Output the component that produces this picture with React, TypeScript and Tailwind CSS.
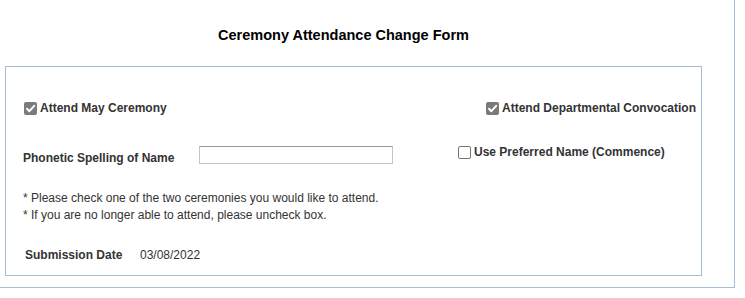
import React from "react";

function Box({ checked }: { checked: boolean }) {
  if (checked) {
    return (
      <span className="inline-flex h-[13px] w-[13px] shrink-0 items-center justify-center rounded-[2px] bg-[#7a7a7a]">
        <svg viewBox="0 0 13 13" className="h-[13px] w-[13px]">
          <path d="M3 6.8 L5.4 9.2 L10.2 3.8" fill="none" stroke="#fff" strokeWidth="2" strokeLinecap="round" strokeLinejoin="round" />
        </svg>
      </span>
    );
  }
  return <span className="inline-block h-[13px] w-[13px] shrink-0 rounded-[2px] border border-[#767676] bg-white" />;
}

function Check({ label, checked }: { label: string; checked: boolean }) {
  return (
    <label className="flex items-center gap-[3px] font-bold text-[#333]">
      <Box checked={checked} />
      <span>{label}</span>
    </label>
  );
}

export default function App() {
  return (
    <div className="h-[298px] w-[745px] bg-white text-[12px] leading-[16px] text-[#333] [font-family:'Liberation_Sans',Arial,sans-serif]">
      <div className="h-[288px] w-[735px] border-b border-r border-[#a7bccf]">
        <h1 className="w-[687px] pt-[27px] pb-[22px] text-center text-[14.5px] leading-[17px] font-bold text-black">
          Ceremony Attendance Change Form
        </h1>
        <div className="ml-[5px] h-[210px] w-[697px] border border-[#a7bccf]">
          <div className="mt-[33px] flex h-[16px] items-center justify-between pl-[18px] pr-[5px]">
            <Check label="Attend May Ceremony" checked />
            <Check label="Attend Departmental Convocation" checked />
          </div>
          <div className="mt-[28px] flex items-start pl-[17px]">
            <span className="mt-[6px] w-[176px] font-bold">Phonetic Spelling of Name</span>
            <input
              type="text"
              className="mt-[2px] h-[18px] w-[194px] border border-[#c4c4c4] border-t-[#999] bg-white px-1 outline-none"
            />
            <div className="ml-[65px]">
              <Check label="Use Preferred Name (Commence)" checked={false} />
            </div>
          </div>
          <div className="mt-[24px] pl-[17px] leading-[17px]">
            <p>* Please check one of the two ceremonies you would like to attend.</p>
            <p>* If you are no longer able to attend, please uncheck box.</p>
          </div>
          <div className="mt-[23px] flex pl-[19px]">
            <span className="w-[115px] font-bold">Submission Date</span>
            <span>03/08/2022</span>
          </div>
        </div>
      </div>
    </div>
  );
}
